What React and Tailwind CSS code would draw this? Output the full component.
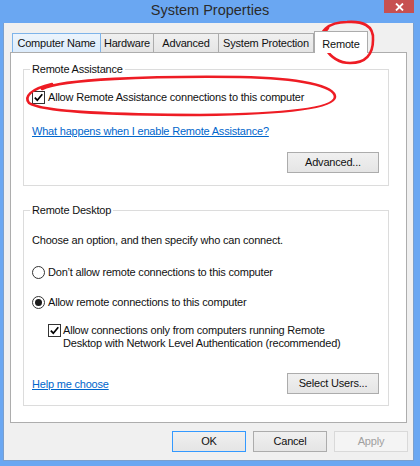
import React from 'react';

const font = "font-['Liberation_Sans',Arial,sans-serif]";

const CheckBox = ({ checked }) => (
    <span className="w-[13px] h-[13px] shrink-0 border border-[#333333] bg-white flex items-center justify-center">
        {checked && (
            <svg width="11" height="11" viewBox="0 0 11 11">
                <path d="M1.8 5.6 L4.3 8.2 L9.3 2.2" fill="none" stroke="#000" strokeWidth="1.7" />
            </svg>
        )}
    </span>
);

const Radio = ({ checked }) => (
    <span className="w-[13px] h-[13px] shrink-0 rounded-full border border-[#333333] bg-white flex items-center justify-center">
        {checked && <span className="w-[7px] h-[7px] rounded-full bg-[#1a1a1a]" />}
    </span>
);

const Button = ({ children, variant }) => {
    if (variant === 'disabled') {
        return (
            <button className="w-[74px] h-[21px] border border-[#d9d9d9] bg-[#f4f4f4] text-[#a0a0a0] flex items-center justify-center">
                {children}
            </button>
        );
    }
    return (
        <button
            className={
                'h-[21px] border bg-linear-to-b from-[#f0f0f0] to-[#e5e5e5] text-[#111] flex items-center justify-center ' +
                (variant === 'default' ? 'w-[74px] border-[#3399ff]' : variant === 'wide' ? 'w-[92px] border-[#acacac]' : 'w-[74px] border-[#acacac]')
            }
        >
            {children}
        </button>
    );
};

const Tab = ({ label, width, hover, first }) => (
    <div
        className={
            'h-[19px] border-t border-x flex items-center justify-center text-[#111] ' +
            width + ' ' +
            (first ? '' : '-ml-px ') +
            (hover
                ? 'border-[#7eb4ea] bg-linear-to-b from-[#ecf4fc] to-[#dcecfc] relative z-10'
                : 'border-[#acacac] bg-linear-to-b from-[#f0f0f0] to-[#e5e5e5]')
        }
    >
        {label}
    </div>
);

const GroupBox = ({ title, children, className }) => (
    <fieldset className={'border border-[#dcdcdc] ml-[12px] w-[366px] pl-[8px] pr-[9px] ' + className}>
        <legend className="-ml-[2px] px-[2px] leading-[13px] text-[#111]">{title}</legend>
        {children}
    </fieldset>
);

export default function App() {
    return (
        <div className={'relative w-[420px] h-[466px] bg-[#6aa7f2] flex flex-col text-[11px] tracking-[-0.2px] ' + font}>
            {/* title bar */}
            <div className="h-[23px] shrink-0 flex items-center justify-center relative">
                <span className="text-[14.5px] tracking-normal text-[#2b2b2b] pb-[1px]">System Properties</span>
                <div className="absolute right-[6px] top-0 w-[30px] h-[13px] bg-[#c75050] flex items-center justify-center">
                    <svg width="9" height="8" viewBox="0 0 9 8">
                        <path d="M1 0.5 L8 7.5 M8 0.5 L1 7.5" stroke="#fff" strokeWidth="1.8" />
                    </svg>
                </div>
            </div>

            {/* dialog body */}
            <div className="ml-[3px] mr-[6px] mb-[5px] flex-1 bg-[#f0f0f0] border-x border-b border-[#7b9fcc] pt-[8px] px-[6px] flex flex-col">
                {/* tabs */}
                <div className="h-[21px] flex items-end pl-[2px] relative z-10">
                    <Tab label="Computer Name" width="w-[89px]" hover first />
                    <Tab label="Hardware" width="w-[54px]" />
                    <Tab label="Advanced" width="w-[66px]" />
                    <Tab label="System Protection" width="w-[96px]" />
                    <div className="w-[54px] h-[22px] -mb-px border-t border-x border-[#acacac] bg-white flex items-start justify-center pt-[4px] text-[#111]">
                        Remote
                    </div>
                </div>

                {/* tab panel */}
                <div className="h-[371px] border border-[#adadad] bg-white flex flex-col pt-[10px]">
                    <GroupBox title="Remote Assistance" className="pb-[12px]">
                        <label className="mt-[15px] flex items-center gap-[3px] leading-[13px] text-[#111]">
                            <CheckBox checked />
                            <span>Allow Remote Assistance connections to this computer</span>
                        </label>
                        <a className="mt-[21px] block leading-[13px] text-[#0066cc] underline w-fit">
                            What happens when I enable Remote Assistance?
                        </a>
                        <div className="mt-[14px] flex justify-end">
                            <Button variant="wide">Advanced...</Button>
                        </div>
                    </GroupBox>

                    <GroupBox title="Remote Desktop" className="mt-[18px] pb-[11px]">
                        <p className="mt-[17px] leading-[13px] text-[#111]">Choose an option, and then specify who can connect.</p>
                        <label className="mt-[19px] flex items-center gap-[3px] leading-[13px] text-[#111]">
                            <Radio />
                            <span>Don’t allow remote connections to this computer</span>
                        </label>
                        <label className="mt-[17px] flex items-center gap-[3px] leading-[13px] text-[#111]">
                            <Radio checked />
                            <span>Allow remote connections to this computer</span>
                        </label>
                        <label className="mt-[15px] ml-[16px] flex items-start gap-[2px] leading-[13px] text-[#111]">
                            <CheckBox checked />
                            <span>
                                Allow connections only from computers running Remote
                                <br />
                                Desktop with Network Level Authentication (recommended)
                            </span>
                        </label>
                        <div className="mt-[23px] flex items-center justify-between">
                            <a className="leading-[13px] text-[#0066cc] underline pt-[1px]">Help me choose</a>
                            <Button variant="wide">Select Users...</Button>
                        </div>
                    </GroupBox>
                </div>

                {/* dialog buttons */}
                <div className="mt-[8px] flex justify-end gap-[7px] -mr-px">
                    <Button variant="default">OK</Button>
                    <Button>Cancel</Button>
                    <Button variant="disabled">Apply</Button>
                </div>
            </div>

            {/* red hand-drawn annotations */}
            <svg className="absolute inset-0 pointer-events-none" width="420" height="466" viewBox="0 0 420 466">
                <path
                    d="M324 44 C316 32 329 22 347 22 C362 21 374 25 373 40 C373 54 366 63 350 63 C337 63 330 56 325 48 C321 41 322 34 328 28"
                    fill="none"
                    stroke="#ee1c24"
                    strokeWidth="2.6"
                    strokeLinecap="round"
                />
                <path
                    d="M42 89 C62 79 150 76 240 77 C300 78 335 86 335 97 C334 109 280 114 200 115 C120 115 42 112 29 103 C24 97 30 89 52 84"
                    fill="none"
                    stroke="#ee1c24"
                    strokeWidth="2.6"
                    strokeLinecap="round"
                />
            </svg>
        </div>
    );
}
